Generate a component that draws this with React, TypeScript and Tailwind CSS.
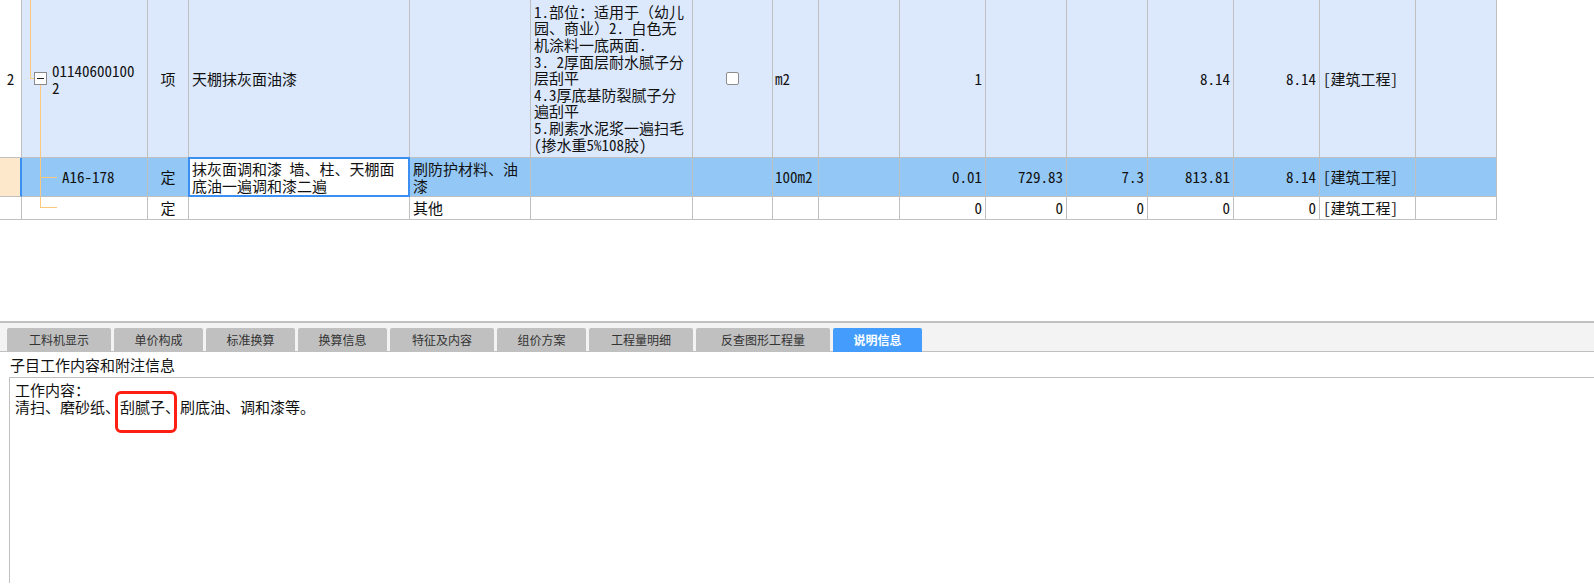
import React from "react";

const W = [
  "w-[22px]",
  "w-[126px]",
  "w-[41px]",
  "w-[221px]",
  "w-[121px]",
  "w-[162px]",
  "w-[80px]",
  "w-[46px]",
  "w-[81px]",
  "w-[86px]",
  "w-[81px]",
  "w-[81px]",
  "w-[86px]",
  "w-[86px]",
  "w-[96px]",
  "w-[81px]",
];

function Cell({
  i,
  className = "",
  children,
}: {
  i: number;
  className?: string;
  children?: React.ReactNode;
}) {
  return (
    <div
      className={`${W[i]} shrink-0 border-r border-b border-[#c0c0c0] flex items-center relative ${className}`}
    >
      {children}
    </div>
  );
}

const TREE = "absolute bg-[#fbc87c]";

const tabs: { label: string; w: string; active?: boolean }[] = [
  { label: "工料机显示", w: "w-[104px]" },
  { label: "单价构成", w: "w-[89px]" },
  { label: "标准换算", w: "w-[89px]" },
  { label: "换算信息", w: "w-[89px]" },
  { label: "特征及内容", w: "w-[104px]" },
  { label: "组价方案", w: "w-[89px]" },
  { label: "工程量明细", w: "w-[104px]" },
  { label: "反查图形工程量", w: "w-[134px]" },
  { label: "说明信息", w: "w-[89px]", active: true },
];

export default function App() {
  return (
    <div className="relative w-[1594px] h-[584px] overflow-hidden bg-white text-[#111] text-[15px] leading-[16px] font-['Noto_Sans_Mono_CJK_SC','Noto_Sans_CJK_SC',sans-serif]">
      {/* Grid */}
      <div className="flex flex-col w-[1497px]">
        {/* Row 1 */}
        <div className="flex h-[158px] bg-[#dce9fd]">
          <Cell i={0} className="bg-white justify-center">2</Cell>
          <Cell i={1} className="pl-[30px]">
            <div className={`${TREE} left-[8px] top-0 w-px h-[78px]`} />
            <div className={`${TREE} left-[8px] top-[78px] w-[4px] h-px`} />
            <div className="absolute left-[12px] top-[72px] w-[13px] h-[13px] border border-[#8a8a8a] bg-white flex items-center justify-center">
              <div className="w-[7px] h-px bg-[#222]" />
            </div>
            <div className={`${TREE} left-[18px] top-[85px] w-px h-[73px]`} />
            <div className="leading-[17px]">
              01140600100
              <br />2
            </div>
          </Cell>
          <Cell i={2} className="justify-center">项</Cell>
          <Cell i={3} className="pl-[3px]">天棚抹灰面油漆</Cell>
          <Cell i={4} />
          <Cell i={5} className="pl-[3px]">
            <div className="leading-[16.6px]">
              1.部位：适用于（幼儿
              <br />
              园、商业）2. 白色无
              <br />
              机涂料一底两面.
              <br />
              3. 2厚面层耐水腻子分
              <br />
              层刮平
              <br />
              4.3厚底基防裂腻子分
              <br />
              遍刮平
              <br />
              5.刷素水泥浆一遍扫毛
              <br />
              (掺水重5%108胶)
            </div>
          </Cell>
          <Cell i={6} className="justify-center">
            <div className="w-[13px] h-[13px] border border-[#8d8d8d] rounded-[2px] bg-white" />
          </Cell>
          <Cell i={7} className="pl-[2px]">m2</Cell>
          <Cell i={8} />
          <Cell i={9} className="justify-end pr-[3px]">1</Cell>
          <Cell i={10} />
          <Cell i={11} />
          <Cell i={12} className="justify-end pr-[3px]">8.14</Cell>
          <Cell i={13} className="justify-end pr-[3px]">8.14</Cell>
          <Cell i={14} className="pl-[3px]">[建筑工程]</Cell>
          <Cell i={15} />
        </div>

        {/* Row 2 (selected) */}
        <div className="flex h-[39px] bg-[#93c8f6]">
          <div className="w-[22px] shrink-0 bg-[#fde8cb] border-b border-[#c0c0c0] border-r-2 border-r-[#3b8ef2]" />
          <Cell i={1} className="pl-[40px]">
            <div className={`${TREE} left-[18px] top-0 w-px h-full`} />
            <div className={`${TREE} left-[18px] top-[19px] w-[17px] h-px`} />
            A16-178
          </Cell>
          <Cell i={2} className="justify-center">定</Cell>
          <Cell i={3} className="pl-[3px] bg-white">
            <div className="absolute -left-px -top-px right-[-1px] bottom-[-1px] border-2 border-[#3b8ef2]" />
            <div className="leading-[17px]">
              抹灰面调和漆 墙、柱、天棚面
              <br />
              底油一遍调和漆二遍
            </div>
          </Cell>
          <Cell i={4} className="pl-[3px]">
            <div className="leading-[17px]">
              刷防护材料、油
              <br />漆
            </div>
          </Cell>
          <Cell i={5} />
          <Cell i={6} />
          <Cell i={7} className="pl-[2px]">100m2</Cell>
          <Cell i={8} />
          <Cell i={9} className="justify-end pr-[3px]">0.01</Cell>
          <Cell i={10} className="justify-end pr-[3px]">729.83</Cell>
          <Cell i={11} className="justify-end pr-[3px]">7.3</Cell>
          <Cell i={12} className="justify-end pr-[3px]">813.81</Cell>
          <Cell i={13} className="justify-end pr-[3px]">8.14</Cell>
          <Cell i={14} className="pl-[3px]">[建筑工程]</Cell>
          <Cell i={15} />
        </div>

        {/* Row 3 */}
        <div className="flex h-[23px] bg-white">
          <Cell i={0} />
          <Cell i={1}>
            <div className={`${TREE} left-[18px] top-0 w-px h-[11px]`} />
            <div className={`${TREE} left-[18px] top-[10px] w-[17px] h-px`} />
          </Cell>
          <Cell i={2} className="justify-center">定</Cell>
          <Cell i={3} />
          <Cell i={4} className="pl-[3px]">其他</Cell>
          <Cell i={5} />
          <Cell i={6} />
          <Cell i={7} />
          <Cell i={8} />
          <Cell i={9} className="justify-end pr-[3px]">0</Cell>
          <Cell i={10} className="justify-end pr-[3px]">0</Cell>
          <Cell i={11} className="justify-end pr-[3px]">0</Cell>
          <Cell i={12} className="justify-end pr-[3px]">0</Cell>
          <Cell i={13} className="justify-end pr-[3px]">0</Cell>
          <Cell i={14} className="pl-[3px]">[建筑工程]</Cell>
          <Cell i={15} />
        </div>
      </div>

      {/* spacer */}
      <div className="h-[101px]" />

      {/* Tab bar */}
      <div className="border-t-2 border-[#c0c0c0] bg-[#f3f3f3] h-[31px] pt-[5px] pl-[7px] flex gap-[3px] border-b border-b-[#c0c0c0] box-border">
        {tabs.map((t) => (
          <div
            key={t.label}
            className={`${t.w} h-[24px] rounded-t-[2px] flex items-center justify-center text-[12px] leading-[14px] font-['Noto_Sans_CJK_SC',sans-serif] ${
              t.active ? "bg-[#449dfd] text-white font-bold" : "bg-[#c0c0c0] text-[#333]"
            }`}
          >
            {t.label}
          </div>
        ))}
      </div>

      {/* label row */}
      <div className="h-[25px] flex items-center pl-[10px]">子目工作内容和附注信息</div>

      {/* text box */}
      <div className="ml-[9px] h-[206px] border-l border-t border-[#c0c0c0] pl-[5px] pt-[3px] leading-[17px]">
        工作内容：
        <br />
        清扫、磨砂纸、刮腻子、刷底油、调和漆等。
      </div>

      {/* red annotation */}
      <div className="absolute left-[115px] top-[391px] w-[62px] h-[42px] border-[3px] border-[#ff1e12] rounded-[6px]" />
    </div>
  );
}
